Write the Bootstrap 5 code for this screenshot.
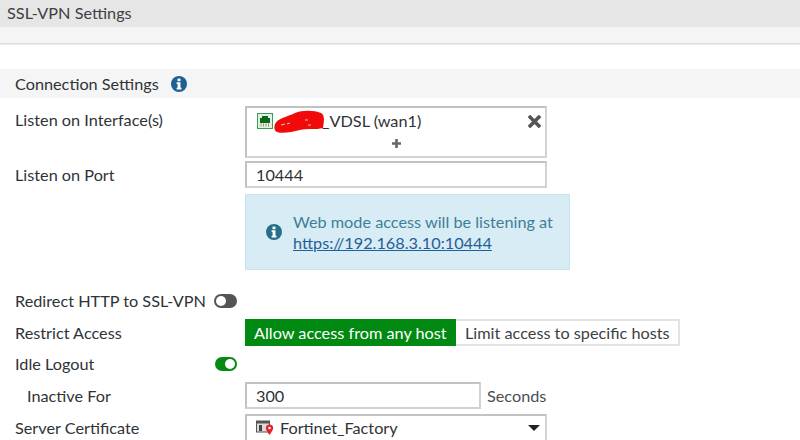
<!DOCTYPE html>
<html lang="en">
<head>
<meta charset="utf-8">
<title>SSL-VPN Settings</title>
<link rel="stylesheet" href="https://cdn.jsdelivr.net/npm/bootstrap@5.3.0/dist/css/bootstrap.min.css">
<style>
html,body{height:440px;overflow:hidden;background:#fff}
body{font-family:Lato,"Open Sans",sans-serif;font-size:16.25px;color:#2f3337;line-height:20px}
.page-head{height:27px;background:#e6e6e6;padding:3px 0 0 7px;line-height:20px;color:#3c4044}
.tool-strip{height:17px;background:#f5f5f5;border-bottom:1px solid #dcdcdc;box-shadow:0 1px 1px #eee}
.sec-head{height:29px;margin-top:25px;background:#f5f5f5;padding-left:15px;gap:12px}
.form-line{padding-left:15px}
.lab{width:230px;flex:none}
.lab-in{padding-left:12px;width:230px;flex:none}
.fld{width:302px;background:#fff;border:2px solid #d2d2d2;border-top-color:#c2c2c2;border-left-color:#c2c2c2;padding-left:9px;flex:none}
.iface{height:52px;margin-top:8px;padding:3px 3px 0 10px}
.port{height:27px;margin-top:3px;line-height:23px}
.tip{width:325px;height:76px;margin:6px 0 0 245px;background:#d8ecf5;border:1px solid #c5e4f1;color:#3f7f96;padding:0 15px 0 20px;gap:11px;line-height:21px}
.tip a{color:#1f6098}
.red{width:52px;height:23px;flex:none}
.sw{height:14px;border-radius:7px;flex:none}
.sw-off{width:23px;background:#555;margin-left:8px}
.sw-on{width:22px;background:#068a16}
.knob{width:10px;height:10px;border-radius:50%;background:#fff;margin:2px}
.r-red{margin-top:21px;height:20px}
.seg{height:27px;margin-top:8px}
.seg-a{background:#008a12;color:#fff;width:211px;padding-left:9px;line-height:27px}
.seg-b{width:224px;border:2px solid #e3e3e3;border-left:0;padding-left:9px;line-height:23px;color:#3c4044}
.r-idle{margin-top:8px;height:20px}
.r-ina{margin-top:8px;height:27px}
.ina-box{width:236px;height:27px;line-height:23px;padding-left:9px}
.sec-txt{margin-left:6px;color:#4a4e52}
.r-cert{margin-top:5px;height:30px}
.cert-box{height:30px;line-height:24px;padding:0 5px 2px 9px;gap:6px}
.caret-dn{width:0;height:0;border:6px solid transparent;border-top:6px solid #222;border-bottom:0;margin-left:auto}
.x-mark{flex:none}
.plus-wrap{margin-top:4px;height:16px;padding-right:6px}
</style>
</head>
<body>
<div class="page-head">SSL-VPN Settings</div>
<div class="tool-strip"></div>

<div class="sec-head d-flex align-items-center">
  <span>Connection Settings</span>
  <svg width="16" height="16" viewBox="0 0 16 16"><circle cx="8" cy="8" r="8" fill="#1f5f92"/><rect x="6.5" y="2.6" width="3" height="2.6" fill="#fff"/><path d="M5.6 6.300h3.900v5.400h1v1.700H5.600v-1.700h1v-3.700h-1z" fill="#fff"/></svg>
</div>

<div class="form-line d-flex">
  <div class="lab" style="margin-top:12px">Listen on Interface(s)</div>
  <div class="fld iface">
    <div class="d-flex align-items-center" style="height:20px">
      <svg width="16" height="16" viewBox="0 0 16 16" class="flex-shrink-0"><rect x=".5" y=".5" width="15" height="15" fill="#dff2e4" stroke="#3f9a5a"/><path d="M5 3h6v2h2v5H3V5h2z" fill="#0a6a1c"/><path d="M4 10.500v3M6.500 10.500v3M9 10.500v3M11.500 10.500v3" stroke="#9a9a5a"/></svg>
      <svg class="red" viewBox="0 0 52 23" style="margin-left:1px;margin-right:-5px"><path d="M1 14C4 8 13 7 21 3 28 0 40 0 47 3c4 2 3 8 2 15-7 2-16 0-23 2-8 2-18 4-23 2-3-1-3-5-2-8z" fill="#f00a0a"/><path d="M7 15l4-1M13 14l3-1M31 10h3M34 15h3" stroke="#f7c8c8"/></svg>
      <span style="margin-left:1px">_VDSL (wan1)</span>
      <svg class="x-mark ms-auto" width="13" height="13" viewBox="0 0 13 13" style="margin-right:1px"><path d="M2.200 2.200l8.600 8.600M10.800 2.200l-8.600 8.600" stroke="#555" stroke-width="3.600" stroke-linecap="square"/></svg>
    </div>
    <div class="plus-wrap d-flex justify-content-center align-items-center"><svg width="9" height="9" viewBox="0 0 9 9"><path d="M4.500 0v9M0 4.500h9" stroke="#666" stroke-width="2.600"/></svg></div>
  </div>
</div>

<div class="form-line d-flex">
  <div class="lab" style="margin-top:7px">Listen on Port</div>
  <div class="fld port">10444</div>
</div>

<div class="tip d-flex align-items-center">
  <svg width="16" height="16" viewBox="0 0 16 16" class="flex-shrink-0"><circle cx="8" cy="8" r="8" fill="#256f8a"/><rect x="6.500" y="2.600" width="3" height="2.600" fill="#fff"/><path d="M5.600 6.300h3.900v5.400h1v1.700H5.600v-1.700h1v-3.700h-1z" fill="#fff"/></svg>
  <div>Web mode access will be listening at<br><a href="#">https://192.168.3.10:10444</a></div>
</div>

<div class="form-line d-flex align-items-center r-red">
  <span>Redirect HTTP to SSL-VPN</span>
  <span class="sw sw-off d-flex"><span class="knob"></span></span>
</div>

<div class="form-line d-flex align-items-center seg">
  <div class="lab">Restrict Access</div>
  <div class="seg-a">Allow access from any host</div>
  <div class="seg-b">Limit access to specific hosts</div>
</div>

<div class="form-line d-flex align-items-center r-idle">
  <div class="lab" style="width:200px">Idle Logout</div>
  <span class="sw sw-on d-flex justify-content-end"><span class="knob"></span></span>
</div>

<div class="form-line d-flex align-items-center r-ina">
  <div class="lab-in">Inactive For</div>
  <div class="fld ina-box">300</div>
  <span class="sec-txt">Seconds</span>
</div>

<div class="form-line d-flex align-items-start r-cert">
  <div class="lab" style="margin-top:4px">Server Certificate</div>
  <div class="fld cert-box d-flex align-items-center">
    <svg width="18" height="17" viewBox="0 0 18 17" class="flex-shrink-0"><rect x=".5" y="1" width="13" height="11" fill="#dcdcdc" stroke="#555"/><rect x="0" y="1" width="14" height="2.500" fill="#555"/><rect x="3" y="5" width="3" height="6" fill="#444"/><path d="M13.500 4.500c2.300 0 3.700 1.600 3.700 3.400 0 2-2 4.500-3.700 7-1.700-2.500-3.700-5-3.700-7 0-1.800 1.400-3.400 3.700-3.400z" fill="#e8202a"/><circle cx="13.500" cy="8" r="1.300" fill="#fff"/></svg>
    <span>Fortinet_Factory</span>
    <span class="caret-dn"></span>
  </div>
</div>
</body>
</html>
